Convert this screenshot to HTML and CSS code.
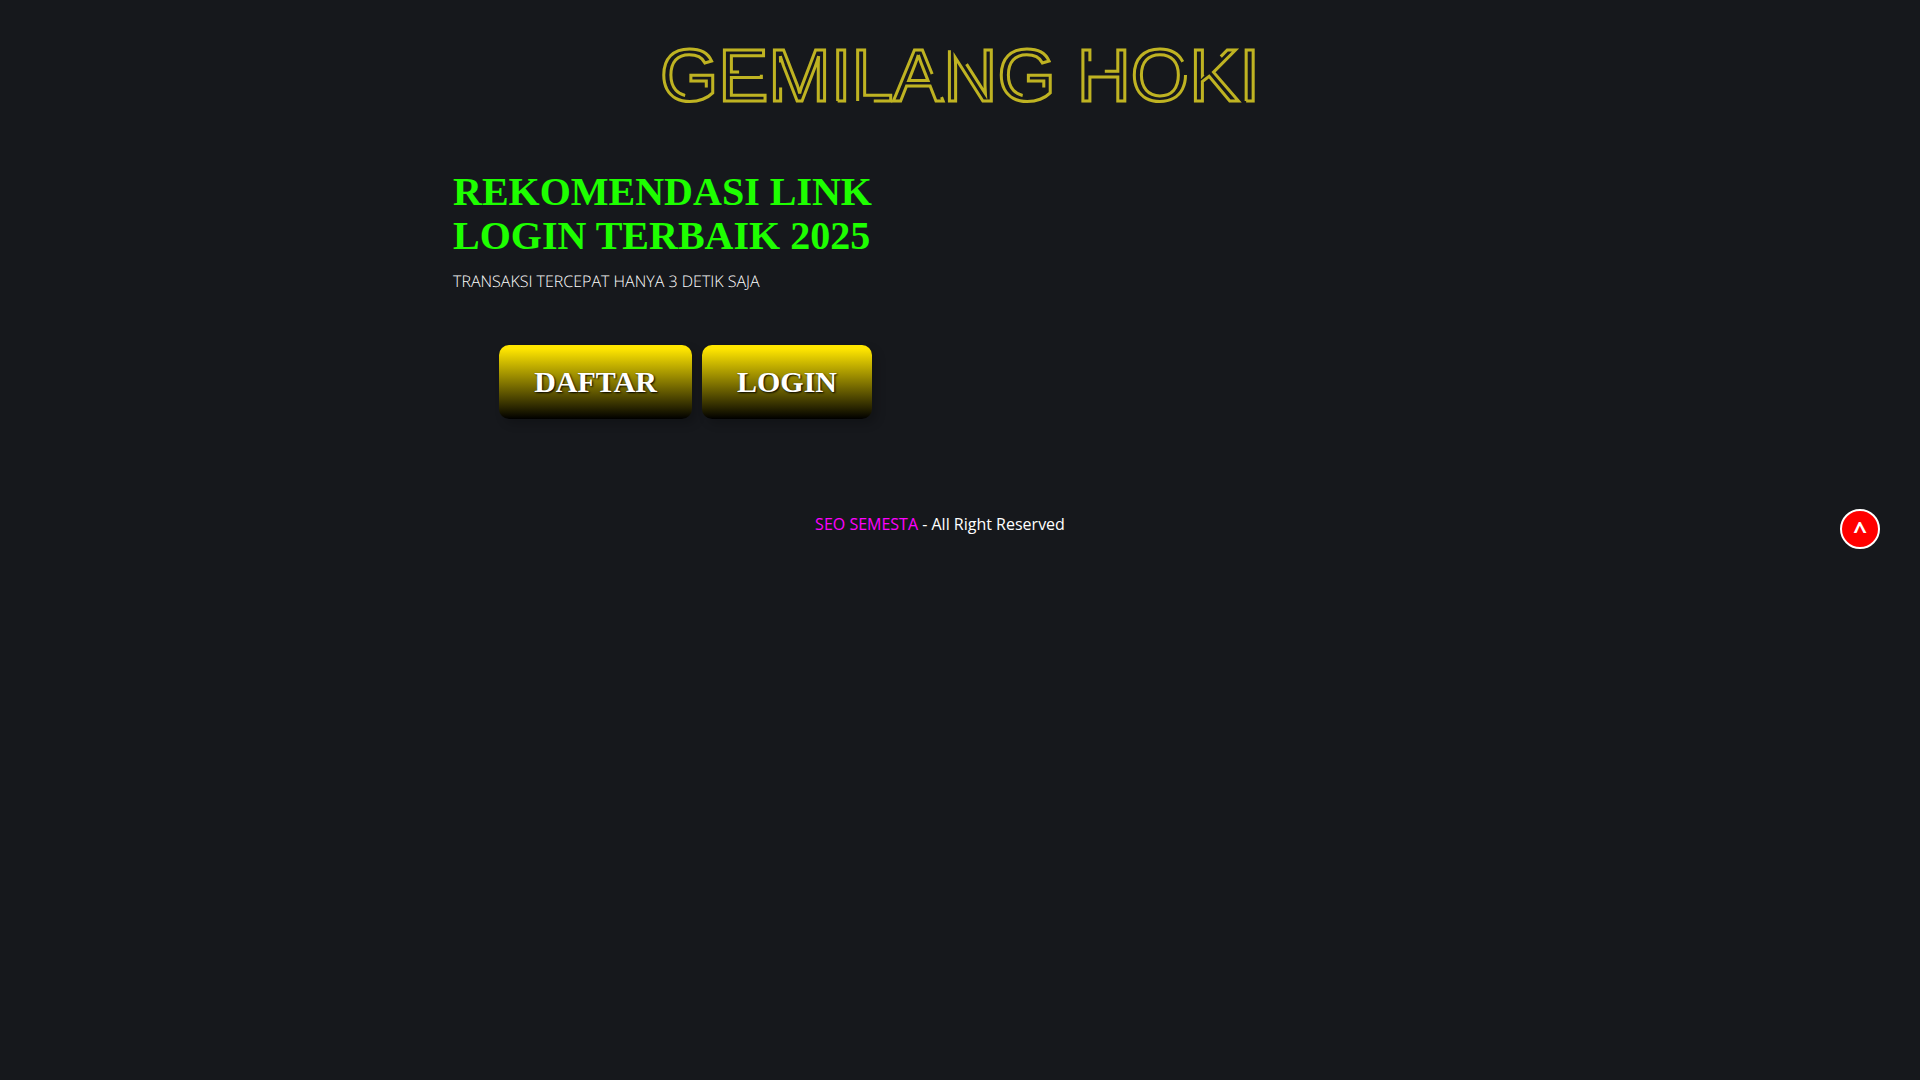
FILE: index.html
```
<!DOCTYPE html>
<html lang="id">

<head>
    <meta charset="UTF-8">
    <meta name="viewport" content="width=device-width, initial-scale=1.0">
    <title>GEMILANG HOKI</title>
    <link rel="stylesheet" href="styles.css">
</head>

<body>

    <header class="logo">
        <svg class="logo-svg" role="img" aria-label="GEMILANG HOKI">
            <text x="50%" y="101" text-anchor="middle">GEMILANG HOKI</text>
        </svg>
    </header>

    <main class="container">
        <section class="intro">
            <h1>REKOMENDASI LINK LOGIN TERBAIK 2025</h1>
            <p>TRANSAKSI TERCEPAT HANYA 3 DETIK SAJA</p>
            <div class="buttons">
                <a class="btn" href="#daftar">DAFTAR</a>
                <a class="btn" href="#login">LOGIN</a>
            </div>
        </section>
    </main>

    <footer class="footer">
        <p><a href="#seo">SEO SEMESTA</a> - All Right Reserved</p>
        <button class="to-top" type="button" onclick="window.scrollTo(0, 0)">^</button>
    </footer>

</body>

</html>
```

FILE: styles.css
```
* {
    box-sizing: border-box;
}

body {
    margin: 0;
    background-color: #16181c;
    color: #fff;
    font-family: "Open Sans", sans-serif;
    font-size: 16px;
    line-height: 24px;
}

.logo-svg {
    display: block;
    width: 100%;
    height: 150px;
}

/* Outlined title, each letter left open where the stroke breaks */
.logo-svg text {
    font-family: "Liberation Sans", Arial, sans-serif;
    font-size: 75px;
    fill: none;
    stroke: #bfb322;
    stroke-width: 3px;
    stroke-dasharray: 152 25 2000;
}

.container {
    max-width: 1014px;
    margin: 0 auto;
    padding-top: 20px;
}

.intro {
    width: fit-content;
    max-width: 419px;
}

.intro h1 {
    margin: 0;
    color: #1eff00;
    font-family: "Liberation Serif", "Times New Roman", serif;
    font-size: 40px;
    line-height: 44px;
}

.intro p {
    margin: 11px 0 52px;
    color: #fff;
    font-weight: 300;
    text-rendering: geometricPrecision;
}

.buttons {
    display: flex;
    justify-content: flex-end;
    gap: 10px;
}

.btn {
    padding: 20px 35px;
    border-radius: 10px;
    background: linear-gradient(to bottom, #ffe600 5%, #000 100%);
    box-shadow: 5px 5px 10px rgba(0, 0, 0, 0.2);
    color: #fff;
    font-family: "Liberation Serif", "Times New Roman", serif;
    font-size: 30px;
    font-weight: bold;
    line-height: 34px;
    text-decoration: none;
    text-shadow: 1px 1px 2px #000;
}

.footer {
    display: flex;
    align-items: flex-start;
    padding: 90px 40px 40px;
}

.footer p {
    flex: 1;
    margin: 3px 0 0;
    text-align: center;
}

.footer a {
    color: #f0f;
    text-decoration: none;
}

.to-top {
    width: 40px;
    height: 40px;
    padding: 0;
    border: 2px solid #fff;
    border-radius: 50%;
    background-color: #f00;
    color: #fff;
    font-family: "Open Sans", sans-serif;
    font-size: 24px;
    font-weight: bold;
    cursor: pointer;
}
```
